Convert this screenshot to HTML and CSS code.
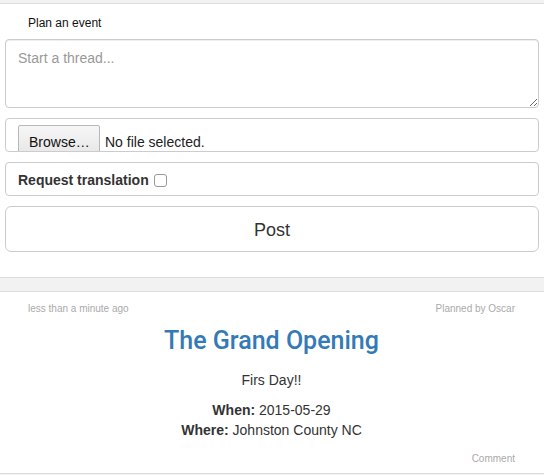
FILE: index.html
```html
<!DOCTYPE html>
<html>
<head>
<meta charset="utf-8">
<link rel="stylesheet" href="styles.css">
</head>
<body>
<div class="page">
  <section class="panel composer">
    <div class="composer-title">Plan an event</div>
    <textarea class="field textarea" placeholder="Start a thread..."></textarea>
    <div class="field filebox">
      <span class="browse">Browse…</span>
      <span class="filename">No file selected.</span>
    </div>
    <div class="field translate">
      <span class="translate-label">Request translation</span>
      <span class="checkbox"></span>
    </div>
    <button class="post-btn">Post</button>
  </section>
  <section class="panel event">
    <div class="meta">
      <span>less than a minute ago</span>
      <span>Planned by Oscar</span>
    </div>
    <h2 class="event-title">The Grand Opening</h2>
    <p class="event-desc">Firs Day!!</p>
    <div class="event-details">
      <div><b>When:</b> 2015-05-29</div>
      <div><b>Where:</b> Johnston County NC</div>
    </div>
    <div class="actions"><span>Comment</span></div>
  </section>
</div>
</body>
</html>
```
FILE: styles.css
```css
html, body {
  margin: 0;
  padding: 0;
  background: #f2f2f2;
  font-family: "Liberation Sans", Helvetica, Arial, sans-serif;
  color: #333;
}
.page {
  padding-top: 3px;
}
.panel {
  background: #fff;
  border-top: 1px solid #dcdcdc;
  border-bottom: 1px solid #dcdcdc;
}
.composer {
  padding: 0 5px 25px;
}
.composer-title {
  height: 35px;
  line-height: 38px;
  padding-left: 23px;
  font-size: 12px;
  color: #111;
}
.field {
  display: block;
  width: 100%;
  box-sizing: border-box;
  border: 1px solid #ccc;
  border-radius: 4px;
  background: #fff;
  font-family: inherit;
  font-size: 14px;
  color: #555;
}
.textarea {
  height: 69px;
  padding: 8px 12px 6px;
  line-height: 20px;
  resize: vertical;
  box-shadow: inset 0 1px 1px rgba(0,0,0,.075);
  margin: 0;
}
.textarea::placeholder {
  color: #999;
}
.filebox {
  margin-top: 10px;
  height: 34px;
  overflow: hidden;
  display: flex;
  align-items: flex-start;
  padding: 6px 12px 0;
  color: #222;
}
.browse {
  flex: none;
  width: 82px;
  height: 32px;
  box-sizing: border-box;
  padding: 8px 0 0 10px;
  line-height: 16px;
  border: 1px solid #b8b8b8;
  border-radius: 2px;
  background: linear-gradient(#f6f6f6, #e6e6e6);
  color: #111;
}
.filename {
  margin-left: 5px;
  padding-top: 9px;
  line-height: 16px;
}
.translate {
  margin-top: 10px;
  height: 34px;
  display: flex;
  align-items: center;
  padding: 2px 12px 0;
  color: #333;
}
.translate-label {
  font-weight: bold;
}
.checkbox {
  width: 11px;
  height: 11px;
  margin-left: 5px;
  margin-top: 1px;
  border: 1px solid #999;
  border-radius: 3px;
  background: #fff;
}
.post-btn {
  display: block;
  width: 100%;
  margin-top: 10px;
  height: 46px;
  padding-top: 4px;
  border: 1px solid #ccc;
  border-radius: 6px;
  background: #fff;
  font-family: inherit;
  font-size: 18px;
  color: #333;
}
.event {
  margin-top: 13px;
  padding: 10px 29px 7px 28px;
  text-align: center;
}
.meta {
  display: flex;
  justify-content: space-between;
  font-size: 10px;
  line-height: 14px;
  color: #aaa;
}
.event-title {
  margin: 10px 0 0;
  font-family: Roboto, "Liberation Sans", sans-serif;
  font-size: 25px;
  line-height: 30px;
  font-weight: 500;
  color: #337ab7;
}
.event-desc {
  margin: 14px 0 0;
  font-size: 14px;
  line-height: 20px;
}
.event-details {
  margin-top: 10px;
  font-size: 14px;
  line-height: 20px;
}
.actions {
  margin-top: 12px;
  display: flex;
  justify-content: flex-end;
  font-size: 10px;
  line-height: 14px;
  color: #aaa;
}
```
